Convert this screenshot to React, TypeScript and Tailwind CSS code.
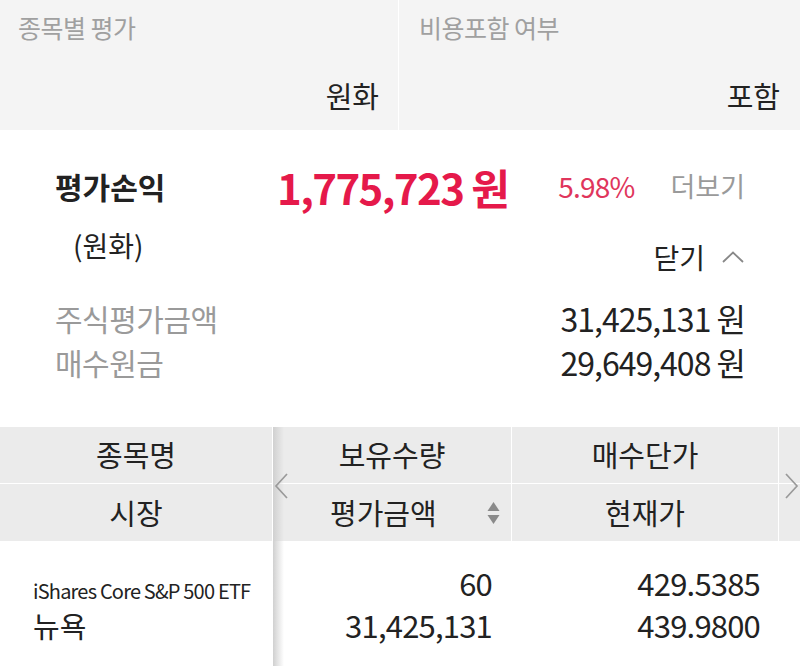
import React from "react";

const font = { fontFamily: '"Noto Sans CJK KR", "Noto Sans", sans-serif' };

function Chevron({ dir }: { dir: "left" | "right" }) {
  return (
    <svg width="15" height="28" viewBox="0 0 15 28" fill="none" stroke="#9a9a9a" strokeWidth={1.7}>
      {dir === "left" ? <path d="M13 2 2 14l11 12" /> : <path d="M2 2l11 12L2 26" />}
    </svg>
  );
}

function SortIcon() {
  return (
    <svg width="13" height="26" viewBox="0 0 13 26" fill="#8a8a8a">
      <path d="M6.5 2 12.5 11H.5z" />
      <path d="M6.5 24 .5 15h12z" />
    </svg>
  );
}

export default function App() {
  return (
    <div className="flex h-[666px] w-[800px] flex-col overflow-hidden bg-white text-[#222]" style={font}>
      {/* 상단 조건 */}
      <div className="grid h-[130px] shrink-0 grid-cols-[398px_1px_1fr] bg-[#f4f4f4]">
        <div className="flex flex-col justify-between pl-[18px] pr-[19px] pt-[9px] pb-[16px]">
          <div className="text-[25px] leading-[36px] tracking-[-0.5px] text-[#a0a0a0]">종목별 평가</div>
          <div className="text-right text-[29px] leading-[38px] text-[#222]">원화</div>
        </div>
        <div className="bg-white" />
        <div className="flex flex-col justify-between pl-[20px] pr-[20px] pt-[9px] pb-[16px]">
          <div className="text-[25px] leading-[36px] tracking-[-0.5px] text-[#a0a0a0]">비용포함 여부</div>
          <div className="text-right text-[29px] leading-[38px] text-[#222]">포함</div>
        </div>
      </div>

      {/* 평가손익 요약 */}
      <div className="shrink-0 px-[55px] pt-[32px]">
        <div className="flex h-[48px] items-center">
          <div className="w-[222px] text-[30px] font-bold">평가손익</div>
          <div className="text-[42px] font-bold tracking-[-1.6px] text-[#e5194a]">1,775,723 원</div>
          <div className="ml-auto text-[28px] tracking-[-0.8px] text-[#e0355c]">5.98%</div>
          <div className="ml-[36px] text-[27px] text-[#9a9a9a]">더보기</div>
        </div>
        <div className="flex h-[86px] items-start">
          <div className="mt-[21px] pl-[18px] text-[28px] leading-[28px]">(원화)</div>
          <div className="ml-auto mt-[33px] flex items-center gap-[16px] text-[28px] leading-[28px]">
            <span>닫기</span>
            <svg width="24" height="14" viewBox="0 0 24 14" fill="none" stroke="#888" strokeWidth={1.8}>
              <path d="M2 12 12 2.5 22 12" />
            </svg>
          </div>
        </div>
        <div className="flex h-[44px] items-center justify-between">
          <span className="text-[30px] tracking-[-0.5px] text-[#9a9a9a]">주식평가금액</span>
          <span className="text-[32px] tracking-[-1px]">31,425,131 원</span>
        </div>
        <div className="flex h-[44px] items-center justify-between">
          <span className="text-[30px] tracking-[-0.5px] text-[#9a9a9a]">매수원금</span>
          <span className="text-[32px] tracking-[-1px]">29,649,408 원</span>
        </div>
      </div>

      {/* 종목 테이블 */}
      <div className="mt-[43px] flex flex-1">
        <div className="w-[272px] shrink-0">
          <div className="flex h-[56px] items-center justify-center bg-[#ebebeb] text-[29px]">종목명</div>
          <div className="h-px bg-white" />
          <div className="flex h-[57px] items-center justify-center bg-[#ebebeb] text-[29px]">시장</div>
          <div className="pl-[33px] pt-[38px]">
            <div className="text-[20px] leading-[24px] tracking-[-0.8px]">iShares Core S&amp;P 500 ETF</div>
            <div className="mt-[5px] text-[29px] leading-[34px]">뉴욕</div>
          </div>
        </div>
        <div className="w-px shrink-0 bg-white" />
        <div className="relative flex-1">
          <div className="pointer-events-none absolute left-0 top-0 bottom-0 w-[11px] bg-gradient-to-r from-[#d0d0d0] to-transparent" />
          <div className="grid grid-cols-[238px_1px_266px_1px_1fr] bg-[#ebebeb]">
            <div className="flex h-[56px] items-center justify-center text-[29px]">보유수량</div>
            <div className="bg-white" />
            <div className="flex h-[56px] items-center justify-center text-[29px]">매수단가</div>
            <div className="bg-white" />
            <div />
          </div>
          <div className="h-px bg-white" />
          <div className="grid grid-cols-[238px_1px_266px_1px_1fr] bg-[#ebebeb]">
            <div className="flex h-[57px] items-center gap-[50px] pl-[57px] text-[29px]">
              <span>평가금액</span>
              <SortIcon />
            </div>
            <div className="bg-white" />
            <div className="flex h-[57px] items-center justify-center text-[29px]">현재가</div>
            <div className="bg-white" />
            <div />
          </div>
          <div className="absolute left-[1px] top-[45px]">
            <Chevron dir="left" />
          </div>
          <div className="absolute right-[1px] top-[45px]">
            <Chevron dir="right" />
          </div>
          <div className="grid grid-cols-[219px_268px] pt-[21px] text-[31px] leading-[42px] tracking-[-0.8px]">
            <div className="text-right">
              <div>60</div>
              <div>31,425,131</div>
            </div>
            <div className="text-right">
              <div>429.5385</div>
              <div>439.9800</div>
            </div>
          </div>
        </div>
      </div>
    </div>
  );
}
